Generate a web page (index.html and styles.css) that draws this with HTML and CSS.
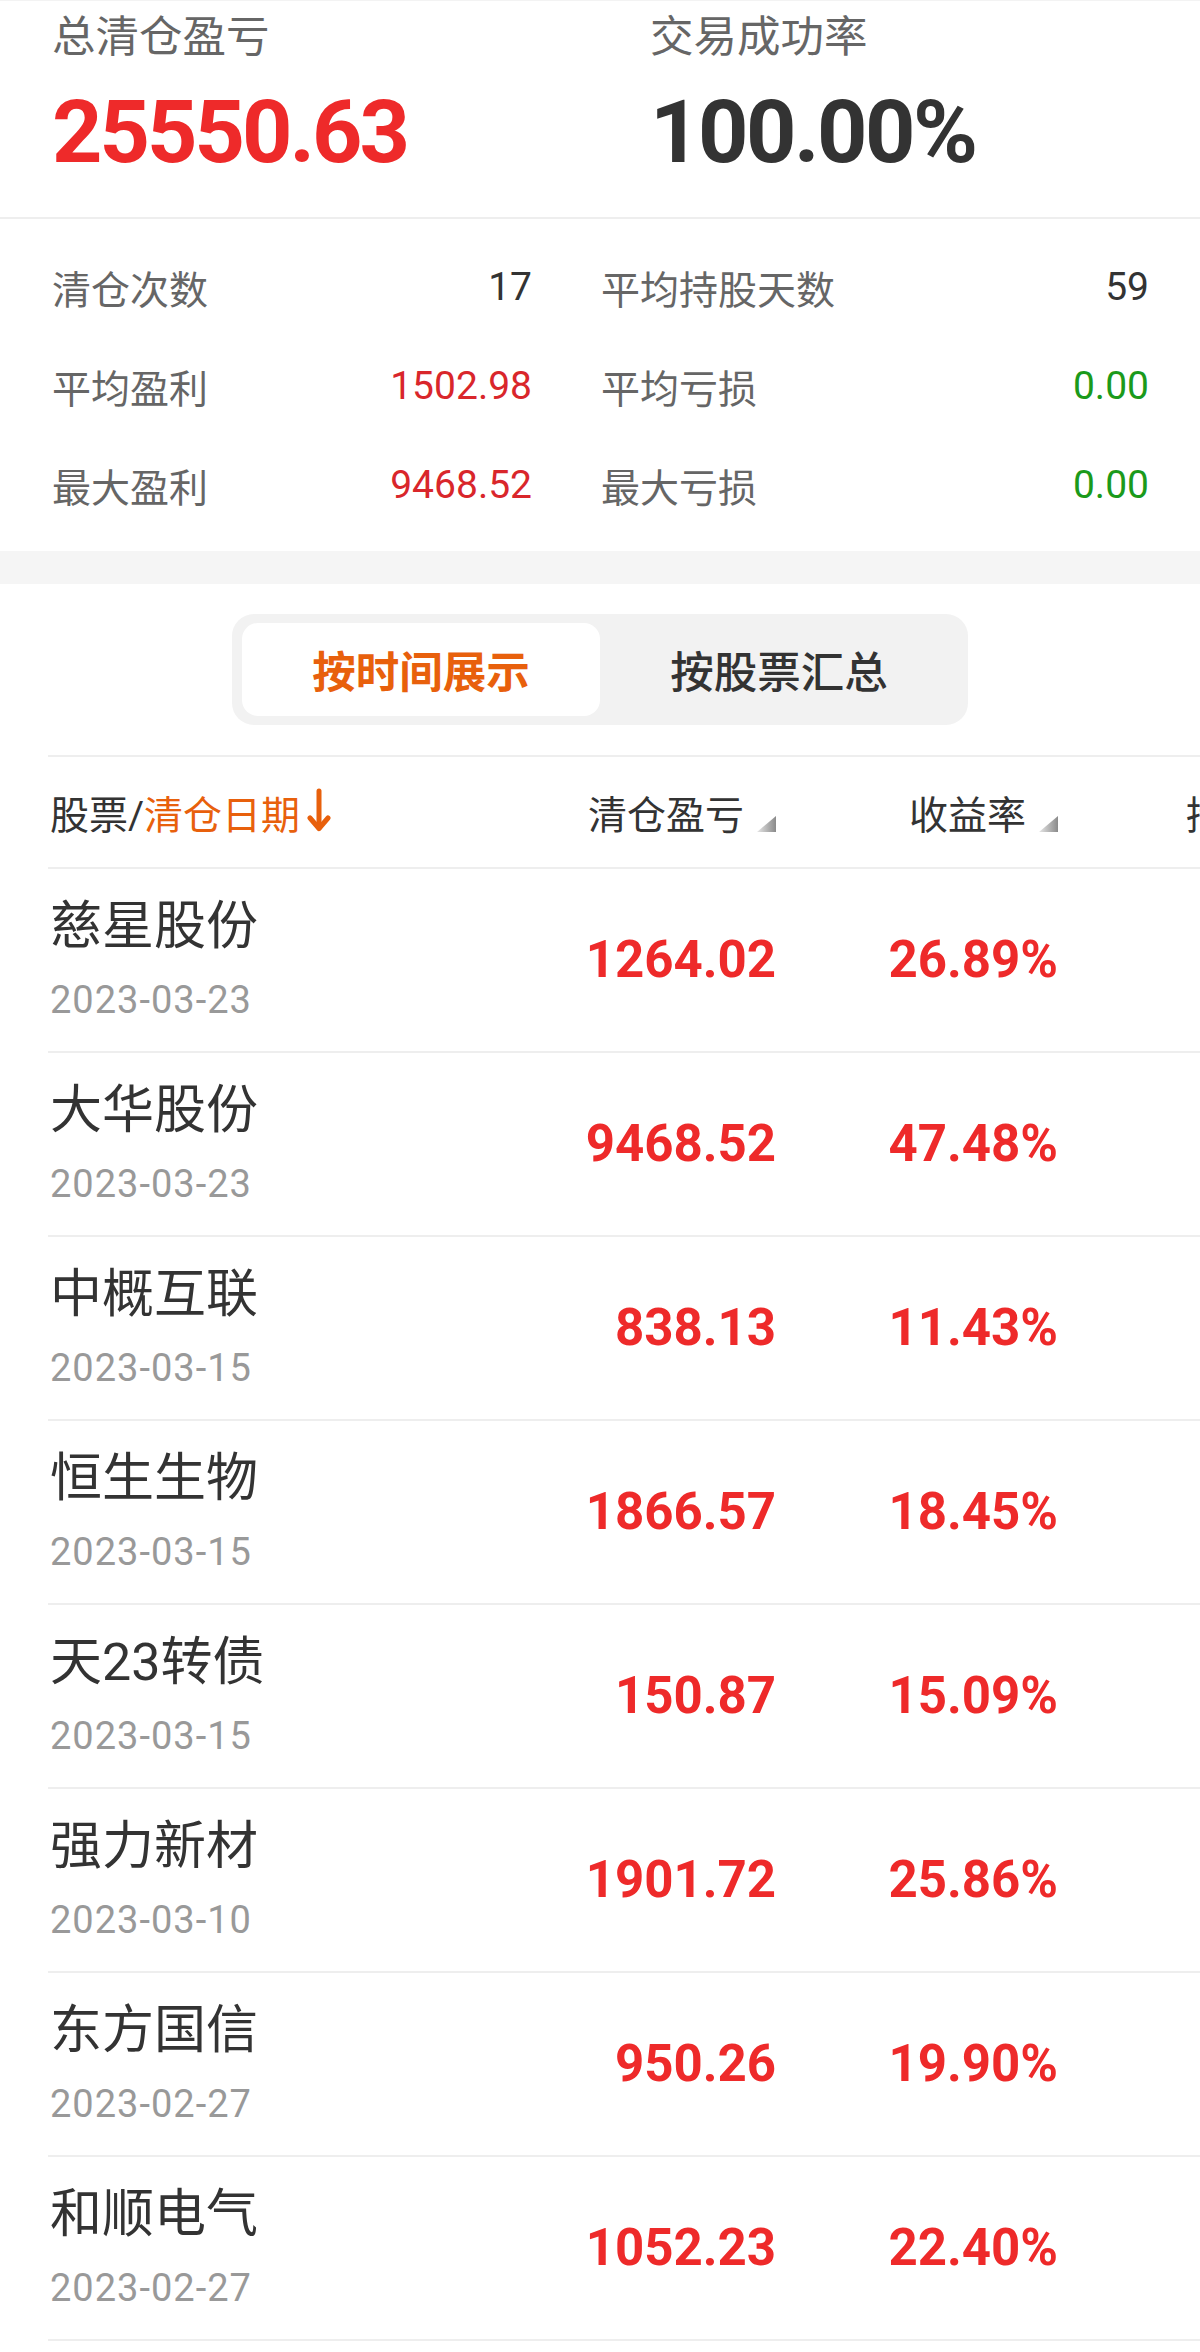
FILE: index.html
```html
<!DOCTYPE html>
<html lang="zh-CN">
<head>
<meta charset="utf-8">
<title>清仓盈亏</title>
<link rel="stylesheet" href="styles.css">
</head>
<body>
<div class="page">
  <section class="summary">
    <div class="sum-col">
      <div class="sum-label">总清仓盈亏</div>
      <div class="sum-value red">25550.63</div>
    </div>
    <div class="sum-col">
      <div class="sum-label">交易成功率</div>
      <div class="sum-value dark">100.00%</div>
    </div>
  </section>

  <section class="stats">
    <div class="stat"><span class="stat-label">清仓次数</span><span class="stat-val">17</span></div>
    <div class="stat"><span class="stat-label">平均持股天数</span><span class="stat-val">59</span></div>
    <div class="stat"><span class="stat-label">平均盈利</span><span class="stat-val up">1502.98</span></div>
    <div class="stat"><span class="stat-label">平均亏损</span><span class="stat-val down">0.00</span></div>
    <div class="stat"><span class="stat-label">最大盈利</span><span class="stat-val up">9468.52</span></div>
    <div class="stat"><span class="stat-label">最大亏损</span><span class="stat-val down">0.00</span></div>
  </section>

  <div class="band"></div>

  <section class="list">
    <div class="seg">
      <div class="seg-tab active">按时间展示</div>
      <div class="seg-tab">按股票汇总</div>
    </div>

    <div class="table">
      <div class="thead">
        <div class="th th-name">股票/<span class="accent">清仓日期</span><svg class="arrow" width="24" height="44" viewBox="0 0 24 44"><path d="M12 3 V40" stroke="#e8600c" stroke-width="5" fill="none" stroke-linecap="round"/><path d="M3 30 L12 40.5 L21 30" stroke="#e8600c" stroke-width="5" fill="none" stroke-linecap="round" stroke-linejoin="round"/></svg></div>
        <div class="th th-num">清仓盈亏<svg class="tri" width="19" height="16" viewBox="0 0 19 16"><defs><linearGradient id="g1" x1="0" y1="0" x2="1" y2="0"><stop offset="0" stop-color="#e6e6e6"/><stop offset="1" stop-color="#8a8a8a"/></linearGradient></defs><polygon points="19,0 19,16 0,16" fill="url(#g1)"/></svg></div>
        <div class="th th-num">收益率<svg class="tri" width="19" height="16" viewBox="0 0 19 16"><polygon points="19,0 19,16 0,16" fill="url(#g1)"/></svg></div>
        <div class="th th-extra">持股天数</div>
      </div>

      <div class="tr"><div class="td-name"><div class="name">慈星股份</div><div class="date">2023-03-23</div></div><div class="td-num">1264.02</div><div class="td-num">26.89%</div></div>
      <div class="tr"><div class="td-name"><div class="name">大华股份</div><div class="date">2023-03-23</div></div><div class="td-num">9468.52</div><div class="td-num">47.48%</div></div>
      <div class="tr"><div class="td-name"><div class="name">中概互联</div><div class="date">2023-03-15</div></div><div class="td-num">838.13</div><div class="td-num">11.43%</div></div>
      <div class="tr"><div class="td-name"><div class="name">恒生生物</div><div class="date">2023-03-15</div></div><div class="td-num">1866.57</div><div class="td-num">18.45%</div></div>
      <div class="tr"><div class="td-name"><div class="name">天23转债</div><div class="date">2023-03-15</div></div><div class="td-num">150.87</div><div class="td-num">15.09%</div></div>
      <div class="tr"><div class="td-name"><div class="name">强力新材</div><div class="date">2023-03-10</div></div><div class="td-num">1901.72</div><div class="td-num">25.86%</div></div>
      <div class="tr"><div class="td-name"><div class="name">东方国信</div><div class="date">2023-02-27</div></div><div class="td-num">950.26</div><div class="td-num">19.90%</div></div>
      <div class="tr"><div class="td-name"><div class="name">和顺电气</div><div class="date">2023-02-27</div></div><div class="td-num">1052.23</div><div class="td-num">22.40%</div></div>
    </div>
  </section>
</div>
</body>
</html>
```

FILE: styles.css
```css
* { box-sizing: border-box; }
html, body { margin: 0; padding: 0; }
body {
  width: 1200px;
  overflow-x: hidden;
  background: #ffffff;
  font-family: Roboto, "Noto Sans CJK SC", sans-serif;
  color: #333333;
}
.page { width: 1200px; overflow: hidden; }

/* summary */
.summary {
  display: grid;
  grid-template-columns: 598px auto;
  padding: 0 0 35px 52px;
  border-top: 1px solid #f3f3f3;
  border-bottom: 2px solid #eeeeee;
}
.sum-label {
  margin-top: 11px;
  font-size: 43.5px;
  line-height: 52px;
  color: #666666;
}
.sum-value {
  margin-top: 18px;
  font-size: 88px;
  line-height: 100px;
  font-weight: 700;
  letter-spacing: -3px;
}
.sum-value.red { color: #ee2a2a; }
.sum-value.dark { color: #333333; letter-spacing: -2.5px; }

/* stats */
.stats {
  display: grid;
  grid-template-columns: 480px 548px;
  column-gap: 69px;
  padding: 18px 0 17px 52px;
}
.stat {
  height: 99px;
  display: flex;
  align-items: center;
  justify-content: space-between;
  font-size: 39px;
}
.stat-label { color: #666666; }
.stat-val { color: #333333; }
.stat-val.up { color: #d9262b; }
.stat-val.down { color: #1b9a1b; }

.band { height: 33px; background: #f5f5f5; }

/* segmented */
.seg {
  margin: 30px 0 0 232px;
  width: 736px;
  height: 111px;
  padding: 9px 10px;
  background: #f2f2f2;
  border-radius: 22px;
  display: flex;
}
.seg-tab {
  flex: 1;
  display: flex;
  align-items: center;
  justify-content: center;
  font-size: 43.5px;
  font-weight: 500;
  color: #333333;
  border-radius: 16px;
}
.seg-tab.active {
  background: #ffffff;
  color: #e8600c;
  font-weight: 700;
}

/* table */
.table {
  margin: 30px 0 0 48px;
  border-top: 2px solid #eeeeee;
}
.thead, .tr {
  display: grid;
  grid-template-columns: 470px 258px 282px 128px 300px;
  border-bottom: 2px solid #eeeeee;
}
.thead .th-extra { grid-column: 5; }
.thead {
  height: 112px;
  align-items: center;
  font-size: 39px;
  color: #333333;
}
.th { white-space: nowrap; }
.th-name { padding-left: 2px; display: flex; align-items: center; }
.accent { color: #e8600c; }
.arrow { margin-left: 7px; margin-top: -4px; }
.th-num {
  display: flex;
  align-items: flex-end;
  justify-content: flex-end;
}
.tri { margin-left: 13px; margin-bottom: 8px; }

.tr {
  padding: 28px 0 29px;
  align-items: center;
}
.td-name { padding-left: 2px; }
.name {
  font-size: 52px;
  line-height: 60px;
  color: #333333;
}
.date {
  margin-top: 21px;
  font-size: 38px;
  line-height: 44px;
  color: #999999;
  letter-spacing: 1px;
}
.td-num {
  justify-self: end;
  font-size: 51px;
  font-weight: 700;
  color: #ee2a2a;
}
```
